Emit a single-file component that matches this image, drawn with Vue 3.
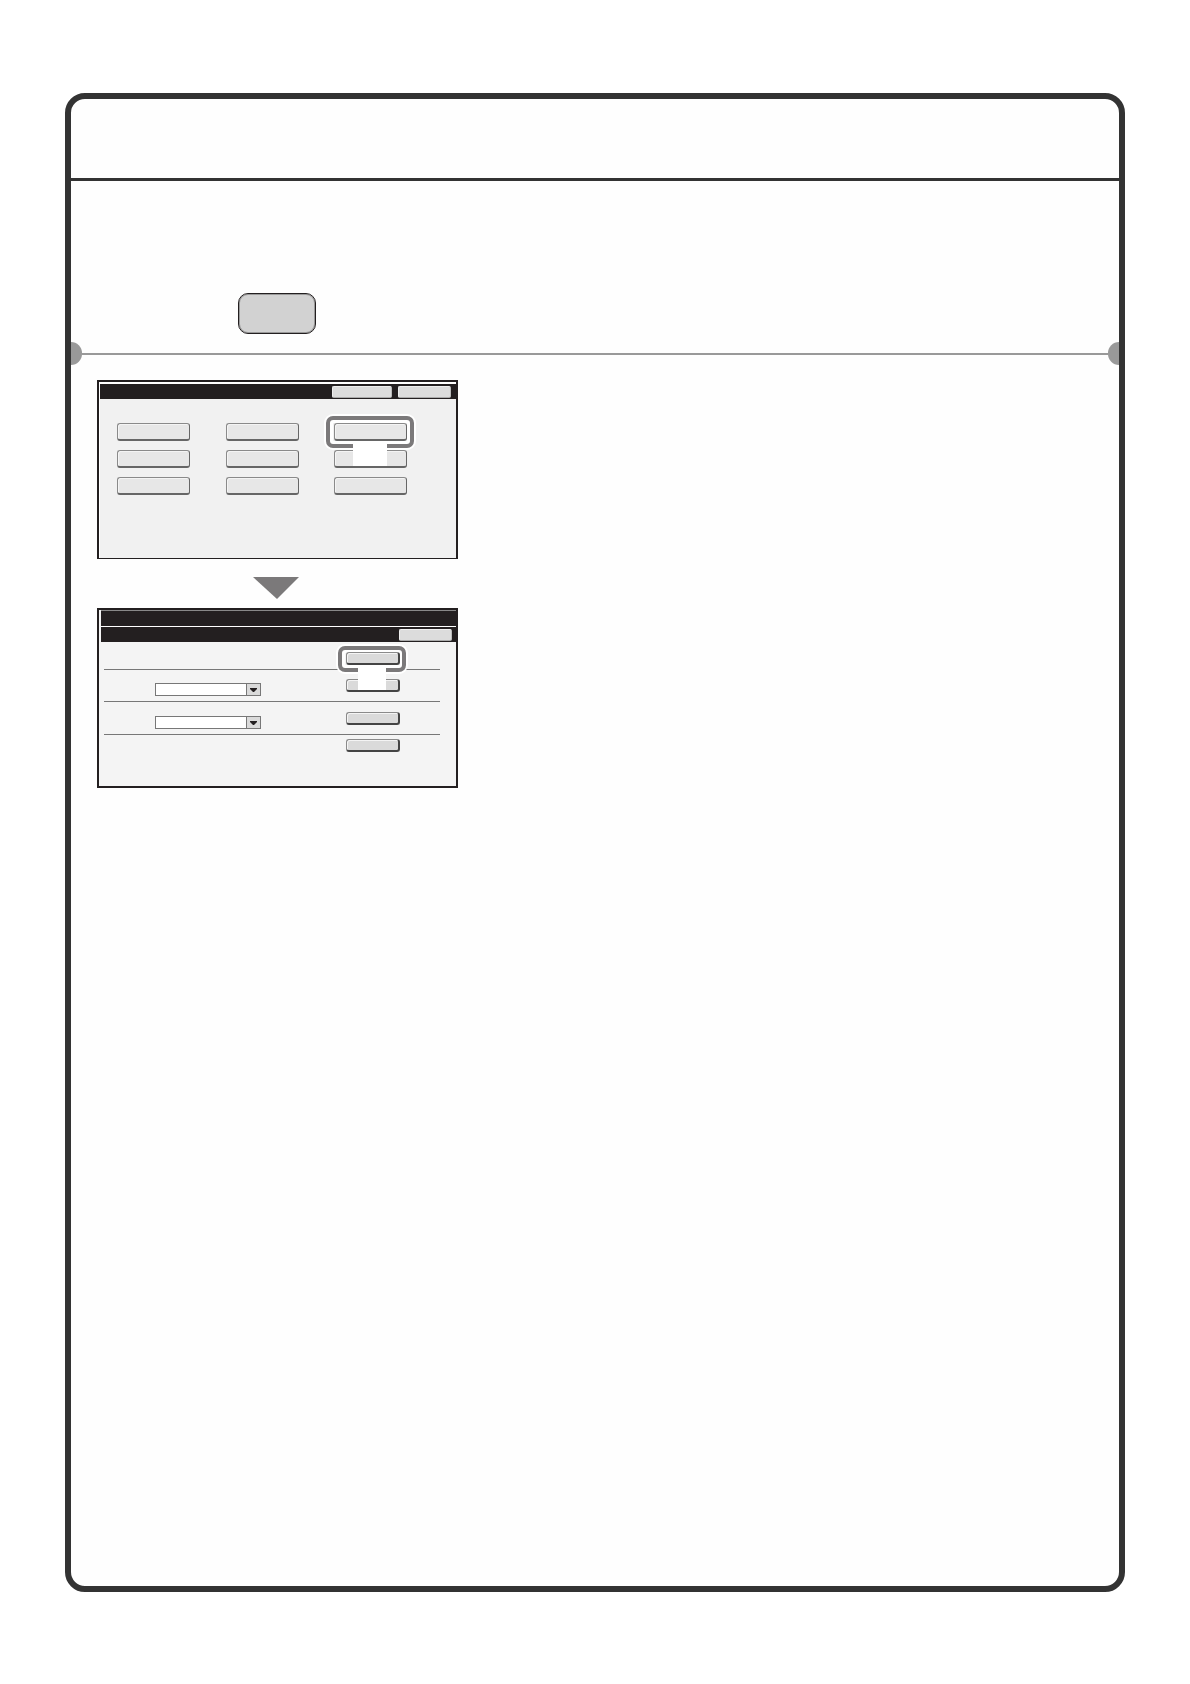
<script setup>
import { ref } from 'vue'

const menuKeys = [1, 2, 3, 4, 5, 6, 7, 8, 9]

const rows = ref([
  { id: 1, select: false, active: true },
  { id: 2, select: true, active: false },
  { id: 3, select: true, active: false },
  { id: 4, select: false, active: false }
])
</script>

<template>
  <div class="page">
    <main class="frame">
      <header class="frame-header"></header>

      <section class="intro">
        <button class="hard-key" type="button" aria-label="Key"></button>
      </section>

      <div class="divider">
        <span class="dot dot-left"></span>
        <span class="line"></span>
        <span class="dot dot-right"></span>
      </div>

      <section class="steps">
        <div class="screen menu-screen">
          <div class="bar">
            <button class="bar-key wide" type="button" aria-label="Option 1"></button>
            <button class="bar-key" type="button" aria-label="Option 2"></button>
          </div>
          <div class="menu-grid">
            <div v-for="key in menuKeys" :key="key" class="cell">
              <button class="key" type="button" :aria-label="`Menu ${key}`"></button>
              <template v-if="key === 3">
                <span class="ring"></span>
                <span class="tag"></span>
              </template>
            </div>
          </div>
        </div>

        <svg class="arrow" viewBox="0 0 46 22" aria-hidden="true">
          <path d="M0 0H46L24 22Z" fill="#7b797a" />
        </svg>

        <div class="screen list-screen">
          <div class="bar"></div>
          <div class="bar">
            <button class="bar-key" type="button" aria-label="Close"></button>
          </div>
          <div class="list">
            <div v-for="row in rows" :key="row.id" class="row" :class="`row-${row.id}`">
              <div v-if="row.select" class="drop">
                <select :aria-label="`List ${row.id}`"></select>
                <span class="drop-button">
                  <svg viewBox="0 0 7 4" aria-hidden="true">
                    <path d="M0 0H7V1L4 4H3L0 1Z" fill="#231f20" />
                  </svg>
                </span>
              </div>
              <div class="cell">
                <button class="key small" type="button" :aria-label="`Row ${row.id}`"></button>
                <template v-if="row.active">
                  <span class="ring"></span>
                  <span class="tag tag-small"></span>
                </template>
              </div>
            </div>
          </div>
        </div>
      </section>
    </main>
  </div>
</template>

<style>
body {
  margin: 0;
  background: #fff;
}
</style>

<style scoped>
.page,
.page * {
  box-sizing: border-box;
}

.page {
  min-height: 100vh;
  padding: 93px 65px 92px;
  font-family: "Liberation Sans", sans-serif;
}

.frame {
  min-height: calc(100vh - 185px);
  border: 6px solid #333;
  border-radius: 20px;
  background: #fefefe;
}

.frame-header {
  height: 82px;
  border-bottom: 3px solid #333;
}

.intro {
  padding: 112px 0 8px 167px;
}

button {
  display: block;
  padding: 0;
}

.hard-key {
  width: 78px;
  height: 41px;
  border: 1px solid #231f20;
  border-radius: 10px;
  background: #d2d2d2;
  box-shadow: inset 0 0 0 1px #999;
}

.divider {
  display: flex;
  align-items: center;
}

.line {
  flex: 1;
  height: 2px;
  background: #999;
}

.dot {
  width: 11px;
  height: 23px;
  background: #999;
}

.dot-left {
  border-radius: 0 12px 12px 0;
}

.dot-right {
  border-radius: 12px 0 0 12px;
}

.steps {
  display: flex;
  flex-direction: column;
  align-items: flex-start;
  padding: 15px 26px;
}

.screen {
  width: 361px;
  max-width: 100%;
  border: 2px solid #231f20;
}

.menu-screen {
  height: 179px;
  padding: 2px 0 0 1px;
  border-bottom-width: 1px;
  background: linear-gradient(#f1f1f1, #f1f1f1) 1px 2px no-repeat #fff;
}

.list-screen {
  height: 180px;
  background: #f4f4f4;
}

.bar {
  display: flex;
  align-items: center;
  justify-content: flex-end;
  gap: 6px;
  height: 15px;
  padding-right: 5px;
  background: #231f20;
}

.list-screen .bar {
  height: 16px;
  margin-left: 2px;
  padding-right: 4px;
  border-top: 1px solid #fff;
}

.list-screen .bar:first-child {
  border-top-color: #888;
}

.bar-key {
  width: 53px;
  height: 12px;
  border: 1px solid #eee;
  border-right-color: #bbb;
  border-bottom-color: #aaa;
  border-radius: 2px;
  background: #dcdcdc;
}

.bar-key.wide {
  width: 60px;
}

.menu-grid {
  display: grid;
  grid-template-columns: repeat(3, 73px);
  justify-content: space-between;
  row-gap: 9px;
  padding: 24px 49px 0 17px;
}

.cell {
  position: relative;
}

.key {
  position: relative;
  width: 73px;
  height: 18px;
  border: 1px solid #8a8a8a;
  border-right: 1px solid #666;
  border-bottom: 2px solid #666;
  border-radius: 3px;
  background: #e7e7e7;
  box-shadow: inset 1px 1px 0 #f4f4f4;
}

.key.small {
  width: 54px;
  height: 13px;
  border-right: 2px solid #444;
  border-bottom-color: #444;
  background: #dadada;
}

/* callout drawn round the highlighted key */
.ring {
  position: absolute;
  z-index: 1;
  inset: -7px -7px -7px -8px;
  border: 4px solid #7b797a;
  border-radius: 7px;
  box-shadow: 0 0 0 2px #fff, inset 0 0 0 3px #fff;
  pointer-events: none;
}

.list .ring {
  inset: -6px -6px -7px -8px;
  box-shadow: 0 0 0 2px #fff, inset 0 0 0 3px #fff;
}

.cell:has(.ring),
.cell:has(.ring) .key {
  z-index: 2;
}

.tag {
  position: absolute;
  z-index: 3;
  top: 21px;
  left: 19px;
  width: 34px;
  height: 22px;
  background: #fff;
}

.tag-small {
  top: 16px;
  left: 12px;
  width: 28px;
}

.arrow {
  width: 46px;
  height: 22px;
  margin: 18px 0 9px 156px;
}

.list {
  padding: 0 16px 0 5px;
}

.row {
  display: flex;
  align-items: flex-end;
  justify-content: flex-end;
  height: 33px;
  padding: 0 40px 9px 51px;
  border-bottom: 1px solid #777;
}

.row-1 {
  height: 28px;
  padding-bottom: 4px;
}

.row-2 {
  height: 32px;
}

.row-4 {
  align-items: flex-start;
  padding-top: 4px;
  border-bottom: none;
}

.drop {
  display: flex;
  position: relative;
  width: 106px;
  height: 13px;
  margin: 0 auto -4px 0;
}

.drop select {
  flex: 1;
  appearance: none;
  padding: 0;
  border: 1px solid #777;
  border-radius: 0;
  background: #fff;
  font-size: 8px;
}

.drop-button {
  display: flex;
  position: absolute;
  inset: 0 0 0 auto;
  align-items: center;
  justify-content: center;
  width: 15px;
  border: 1px solid #777;
  background: #dadada;
  pointer-events: none;
}

.drop-button svg {
  width: 7px;
  height: 4px;
}
</style>
